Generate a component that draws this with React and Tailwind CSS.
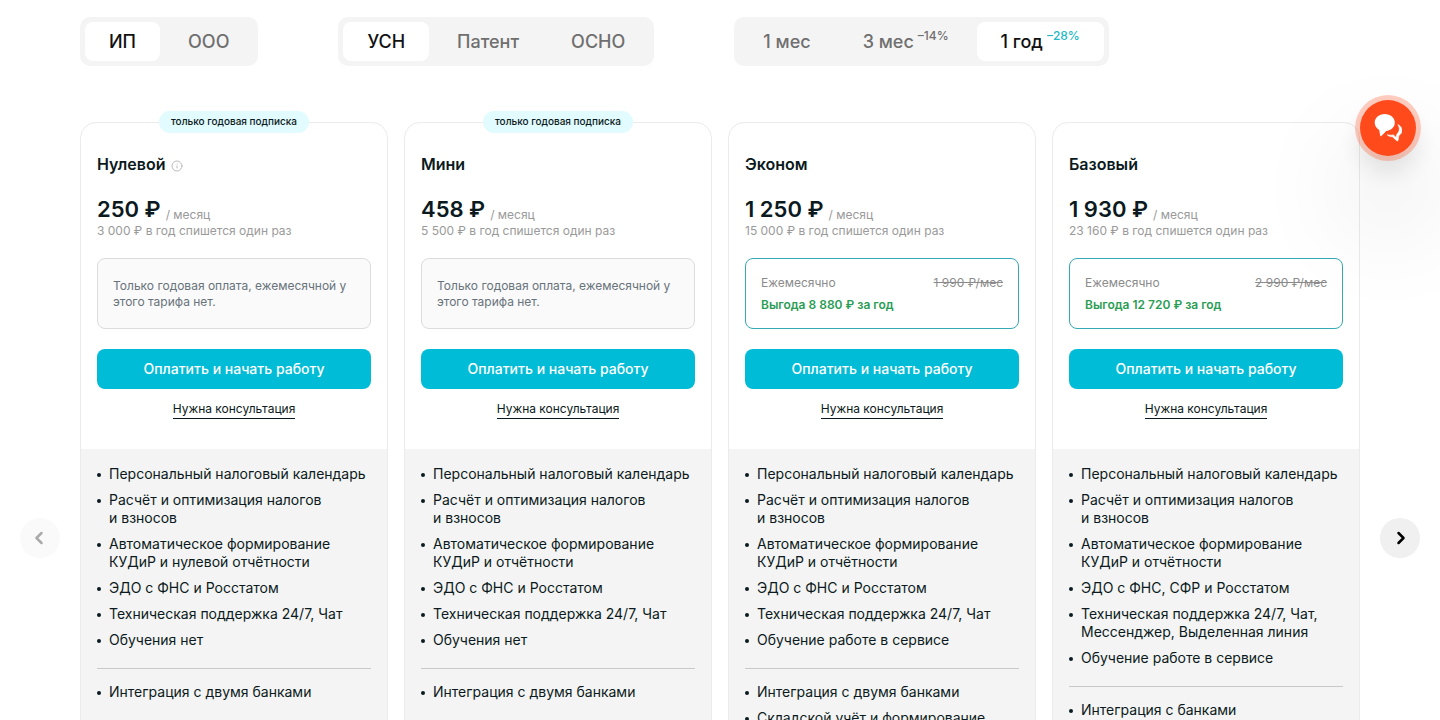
import { useState } from 'react'
import { ChevronLeft, ChevronRight, Info } from 'lucide-react'
import clsx from 'clsx'

const FORMS = [{ id: 'ip', label: 'ИП' }, { id: 'ooo', label: 'ООО' }]

const TAXES = [
  { id: 'usn', label: 'УСН' },
  { id: 'patent', label: 'Патент' },
  { id: 'osno', label: 'ОСНО' },
]

const PERIODS = [
  { id: '1m', label: '1 мес' },
  { id: '3m', label: '3 мес', discount: '–14%' },
  { id: '1y', label: '1 год', discount: '–28%' },
]

const PLANS = [
  {
    name: 'Нулевой',
    info: true,
    yearOnly: true,
    price: '250 ₽',
    total: '3 000 ₽',
    features: [
      'Персональный налоговый календарь',
      'Расчёт и оптимизация налогов и\u00a0взносов',
      'Автоматическое формирование КУДиР и нулевой отчётности',
      'ЭДО с ФНС и Росстатом',
      'Техническая поддержка 24/7, Чат',
      'Обучения нет',
    ],
    extra: ['Интеграция с двумя банками'],
  },
  {
    name: 'Мини',
    yearOnly: true,
    price: '458 ₽',
    total: '5 500 ₽',
    features: [
      'Персональный налоговый календарь',
      'Расчёт и оптимизация налогов и\u00a0взносов',
      'Автоматическое формирование КУДиР и отчётности',
      'ЭДО с ФНС и Росстатом',
      'Техническая поддержка 24/7, Чат',
      'Обучения нет',
    ],
    extra: ['Интеграция с двумя банками'],
  },
  {
    name: 'Эконом',
    price: '1 250 ₽',
    total: '15 000 ₽',
    monthly: '1 990 ₽/мес',
    profit: 'Выгода 8 880 ₽ за год',
    features: [
      'Персональный налоговый календарь',
      'Расчёт и оптимизация налогов и\u00a0взносов',
      'Автоматическое формирование КУДиР и отчётности',
      'ЭДО с ФНС и Росстатом',
      'Техническая поддержка 24/7, Чат',
      'Обучение работе в сервисе',
    ],
    extra: ['Интеграция с двумя банками', 'Складской учёт и формирование'],
  },
  {
    name: 'Базовый',
    price: '1 930 ₽',
    total: '23 160 ₽',
    monthly: '2 990 ₽/мес',
    profit: 'Выгода 12 720 ₽ за год',
    features: [
      'Персональный налоговый календарь',
      'Расчёт и оптимизация налогов и\u00a0взносов',
      'Автоматическое формирование КУДиР и отчётности',
      'ЭДО с ФНС, СФР и Росстатом',
      'Техническая поддержка 24/7, Чат, Мессенджер, Выделенная линия',
      'Обучение работе в сервисе',
    ],
    extra: ['Интеграция с банками'],
  },
]

function Switcher({ items, value, onChange }) {
  return (
    <div className="flex gap-1 rounded-[10px] bg-[#f4f4f4] p-[5px]">
      {items.map((item) => {
        const active = item.id === value
        return (
          <button
            key={item.id}
            type="button"
            aria-pressed={active}
            onClick={() => onChange(item.id)}
            className={clsx(
              'flex h-[39px] items-center gap-1 rounded-lg px-6 text-lg leading-6 font-medium whitespace-nowrap',
              active ? 'bg-white text-[#111]' : 'text-[#6f6f6f]',
            )}
          >
            {item.label}
            {item.discount && (
              <span className={clsx('self-start pt-[6px] text-xs', active && 'text-[#22b8c4]')}>{item.discount}</span>
            )}
          </button>
        )
      })}
    </div>
  )
}

function Features({ items }) {
  return (
    <ul className="flex flex-col gap-2 text-sm leading-[18px]">
      {items.map((text) => (
        <li key={text} className="flex">
          <span className="mt-2 mr-2 size-1 shrink-0 rounded-full bg-[#0b1a20]" />
          <span>{text}</span>
        </li>
      ))}
    </ul>
  )
}

function PlanCard({ plan }) {
  return (
    <article className="relative flex flex-col rounded-2xl border border-[#ebebeb] bg-white">
      {plan.yearOnly && (
        <div className="absolute -top-3 left-1/2 -translate-x-1/2 rounded-full bg-[#e2fbff] px-3 pt-[3px] pb-[5px] text-[10px] leading-[14px] font-medium whitespace-nowrap">
          только годовая подписка
        </div>
      )}
      <div className="flex flex-col px-4 pt-[31px] pb-[30px]">
        <h3 className="flex items-center gap-[6px] text-base leading-5 font-semibold">
          {plan.name}
          {plan.info && <Info className="mt-1 size-3 text-[#bcbcbc]" strokeWidth={2} />}
        </h3>
        <div className="mt-[21px] flex items-end gap-[5px]">
          <span className="text-[22px] leading-7 font-semibold">{plan.price}</span>
          <span className="text-xs leading-4 text-[#9a9a9a]">/ месяц</span>
        </div>
        <p className="text-xs leading-4 text-[#9a9a9a]">{plan.total} в год спишется один раз</p>

        {plan.monthly ? (
          <div className="mt-[19px] flex h-[71px] flex-col justify-center gap-[6px] rounded-lg border border-[#35a9b5] px-[15px] text-xs leading-4">
            <div className="flex justify-between text-[#8b8b8b]">
              <span>Ежемесячно</span>
              <s>{plan.monthly}</s>
            </div>
            <p className="font-semibold text-[#2a9d55]">{plan.profit}</p>
          </div>
        ) : (
          <div className="mt-[19px] flex h-[71px] items-center rounded-lg border border-[#dcdcdc] bg-[#fafafa] px-[15px] text-xs leading-4 text-[#68737b]">
            Только годовая оплата, ежемесячной у этого тарифа нет.
          </div>
        )}

        <button type="button" className="mt-5 h-10 rounded-lg bg-[#00bcd6] text-sm font-medium text-white hover:bg-[#00a9c1]">
          Оплатить и начать работу
        </button>
        <a href="#consult" className="mt-[11px] self-center border-b border-[#0b1a20] pb-px text-xs leading-[17px]">
          Нужна консультация
        </a>
      </div>

      <div className="grow rounded-b-2xl bg-[#f4f4f4] px-4 py-4">
        <Features items={plan.features} />
        <hr className="mt-[19px] mb-[14px] border-[#c9c9c9]" />
        <Features items={plan.extra} />
      </div>
    </article>
  )
}

export default function App() {
  const [form, setForm] = useState('ip')
  const [tax, setTax] = useState('usn')
  const [period, setPeriod] = useState('1y')

  return (
    <main className="bg-white font-['Inter','Liberation_Sans',sans-serif] text-[#0b1a20]">
      <div className="flex flex-wrap gap-x-20 gap-y-4 px-20 pt-[17px]">
        <Switcher items={FORMS} value={form} onChange={setForm} />
        <Switcher items={TAXES} value={tax} onChange={setTax} />
        <Switcher items={PERIODS} value={period} onChange={setPeriod} />
      </div>

      <section className="relative mt-14 px-20 pb-10">
        <div className="grid grid-cols-4 gap-4">
          {PLANS.map((plan) => <PlanCard key={plan.name} plan={plan} />)}
        </div>
        <button type="button" aria-label="Назад" disabled
          className="absolute top-[396px] left-5 flex size-10 items-center justify-center rounded-full bg-[#fafafa] pr-0.5 text-[#ababab]">
          <ChevronLeft className="size-5" strokeWidth={3} />
        </button>
        <button type="button" aria-label="Вперёд"
          className="absolute top-[396px] right-5 flex size-10 items-center justify-center rounded-full bg-[#f0f0f0] pl-0.5 text-black">
          <ChevronRight className="size-5" strokeWidth={3} />
        </button>
      </section>

      <button type="button" aria-label="Чат"
        className="fixed top-[100px] right-6 flex size-14 items-center justify-center rounded-full bg-[#ff4a1c] shadow-[0_0_0_5px_rgba(255,74,28,0.28),0_16px_28px_rgba(0,0,0,0.12),0_60px_100px_20px_rgba(0,0,0,0.08)]">
        <svg viewBox="0 0 28 28" className="size-7" fill="#fff">
          <path d="M10.700 0C5 0 .7 3.700.7 8.600c0 3.200 1.700 5.800 4.500 7.300.4 1.600.7 3.700.9 5.700.1.700.6.800 1.100.4 1.900-1.500 3.700-3.200 4.900-4.900 5.100-.5 8.700-4 8.700-8.500C20.800 3.700 16.500 0 10.700 0Z" />
          <path d="M23.800 10.600c2.600 1.300 4.200 3.300 4.200 5.700 0 2.200-1.200 4-3.100 5.200-.3 1.600-.6 3.200-.8 4.700-.1.800-.7 1-1.300.5-1.700-1.200-3.200-2.600-4.300-3.900-2.300-.1-4.100-.8-5.300-2 1.900.5 4.100.5 6.300.1 1.100 1.100 1.900 1.900 2.700 2.500.2-1.200.4-2.300.7-3.300 2.900-2.500 3.200-6.400.9-9.500Z" stroke="#fff" strokeWidth=".6" strokeLinejoin="round" />
        </svg>
      </button>
    </main>
  )
}
